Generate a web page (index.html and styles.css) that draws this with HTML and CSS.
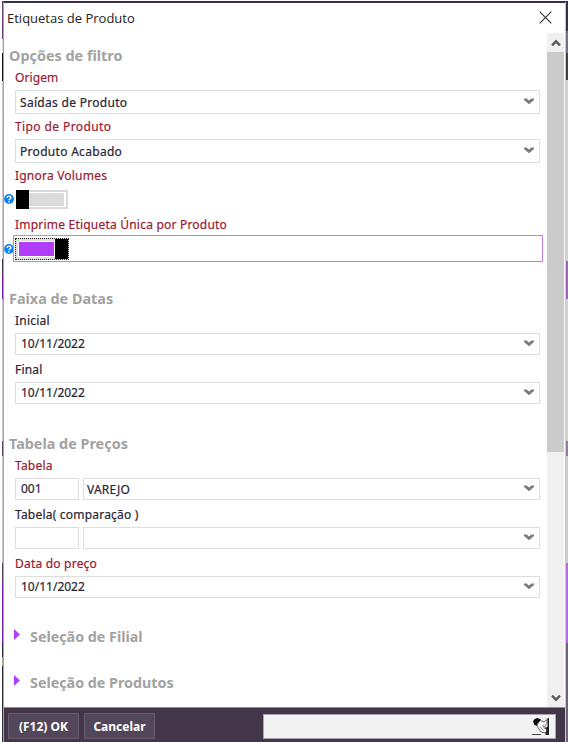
FILE: index.html
```
<!DOCTYPE html>
<html lang="pt-BR">
<head>
<meta charset="utf-8">
<title>Etiquetas de Produto</title>
<link rel="stylesheet" href="styles.css">
</head>
<body>
<svg class="defs" width="0" height="0"><defs>
<symbol id="chev" viewBox="0 0 10 7"><path d="M0 .5h2.6L5 2.6 7.4.5H10v1.6L5 6.2 0 2.1z" fill="#7b7b7b"/></symbol>
<symbol id="arrow" viewBox="0 0 10 8"><path d="M1 6.3l4-4 4 4" fill="none" stroke="#5a5a5a" stroke-width="2.4"/></symbol>
<symbol id="help" viewBox="0 0 10 10"><circle cx="5" cy="5" r="4.9" fill="#087ff5"/><path d="M3.2 4c0-2.6 3.7-2.3 3.7-.3C6.9 4.9 5 4.7 5 6.2" fill="none" stroke="#fff" stroke-width="1.4"/><path d="M4.3 7h1.4v1.4H4.3z" fill="#fff"/></symbol>
</defs></svg>
<div class="desktop">
<div class="backdrop left"></div>
<div class="window">
<header class="titlebar"><span class="title">Etiquetas de Produto</span>
<svg width="13" height="13" viewBox="0 0 13 13"><path d="M.7.7l11.6 11.6M12.3.7L.7 12.3" stroke="#333" stroke-width="1.1"/></svg></header>
<div class="content">
<main class="form">
<h2>Opções de filtro</h2>
<div class="item req"><label class="tight">Origem</label><div class="field tall"><span>Saídas de Produto</span><svg class="chev"><use href="#chev"/></svg></div></div>
<div class="item req"><label class="wide">Tipo de Produto</label><div class="field tall"><span>Produto Acabado</span><svg class="chev"><use href="#chev"/></svg></div></div>
<div class="item req"><label>Ignora Volumes</label><div class="toggle-row"><svg class="help"><use href="#help"/></svg><div class="switch off"><i class="knob"></i><i class="track"></i></div></div></div>
<div class="item req"><label>Imprime Etiqueta Única por Produto</label><div class="toggle-row selected"><svg class="help"><use href="#help"/></svg><div class="outline"><div class="switch on"><i class="track"></i><i class="knob"></i></div></div></div></div>
<h2>Faixa de Datas</h2>
<div class="item"><label>Inicial</label><div class="field date"><span>10/11/2022</span><svg class="chev"><use href="#chev"/></svg></div></div>
<div class="item"><label>Final</label><div class="field date"><span>10/11/2022</span><svg class="chev"><use href="#chev"/></svg></div></div>
<h2>Tabela de Preços</h2>
<div class="item req"><label>Tabela</label><div class="pair"><div class="field date"><span>001</span></div><div class="field name"><span>VAREJO</span><svg class="chev"><use href="#chev"/></svg></div></div></div>
<div class="item"><label>Tabela( comparação )</label><div class="pair"><div class="field date"></div><div class="field name"><span></span><svg class="chev"><use href="#chev"/></svg></div></div></div>
<div class="item req"><label>Data do preço</label><div class="field date"><span>10/11/2022</span><svg class="chev"><use href="#chev"/></svg></div></div>
<div class="group"><svg width="6" height="11"><path d="M0 0l6 5.5L0 11z" fill="#b13dff"/></svg><h2>Seleção de Filial</h2></div>
<div class="group"><svg width="6" height="11"><path d="M0 0l6 5.5L0 11z" fill="#b13dff"/></svg><h2>Seleção de Produtos</h2></div>
</main>
<aside class="scrollbar"><svg class="arrow"><use href="#arrow"/></svg><div class="thumb"></div><svg class="arrow down"><use href="#arrow"/></svg></aside>
</div>
<footer class="actions"><button>(F12) OK</button><button>Cancelar</button>
<div class="status"><svg width="18" height="19" viewBox="0 0 18 19"><path d="M1 4.5L2.5 2l3-1L9 2.5 7.5 5 6 6l-.5 3-3-1z" fill="#111"/><path d="M8.5 3.5L12 5l3-2.5v4L12.500 9l2.500 3-1 4-5-1-4-6L6 6z" fill="#fff" stroke="#555" stroke-width=".9"/><path d="M15.500 1H17v17h-3.500v-2.500l1.500-2-2-2 2.500-2z" fill="#222"/><path d="M8 9.500l3.500 4M10.500 8l2.500 4" stroke="#777" fill="none"/><path d="M0 17.500h9" stroke="#444"/></svg></div></footer>
</div>
<div class="backdrop right"></div>
</div>
</body>
</html>
```
FILE: styles.css
```
* { box-sizing: border-box; }
body { margin: 0; width: 568px; height: 742px; overflow: hidden; font-family: "Noto Sans", "Open Sans", sans-serif; font-size: 12px; color: #292532; background: #fff; }
.defs { position: absolute; }
svg { display: block; flex: none; }
.desktop { display: flex; height: 742px; padding: 1px 0 0 2px; }
.backdrop { width: 1px; border-top: 2px solid #48305a; }
.left { background: linear-gradient(#65427a 0 36px, #ddd 36px 50px, #111 50px 78px, #ccc 78px 256px, #45364f 256px 272px, #741aa8 272px 296px, #c9c9c9 296px 438px, #594064 438px 453px, #ccc 453px 560px, #50405b 560px 578px, #7922ad 578px 640px, #302939 640px 654px, #aaa58f 654px 663px, #302939 663px); }
.right { width: 2px; border-color: #30303b; background: linear-gradient(#363342 0 28px, #777283 28px 50px, #444 50px 77px, #d1d1d1 77px 258px, #a06abc 258px 296px, #d1d1d1 296px 438px, #91809d 438px 453px, #ccc 453px 560px, #b66fe0 560px 640px, #6d6575 640px); }
.window { width: 563px; border-top: 2px solid #3c2e49; border-left: 1px solid #a5a5a5; border-right: 1px solid #c8c8c8; background: #fff; display: flex; flex-direction: column; }
.titlebar { height: 30px; flex: none; display: flex; align-items: center; justify-content: space-between; padding: 0 13px 2px 3px; font-family: "Open Sans", sans-serif; font-size: 13px; color: #222; }
.title { padding-top: 2px; }
.content { height: 674px; flex: none; display: flex; }
.form { width: 543px; flex: none; padding: 13px 7px 0 11px; }
h2 { margin: 27px 0 0 -6px; height: 20px; line-height: 20px; font-size: 14.4px; font-weight: 700; color: #a2a2a2; white-space: nowrap; }
h2:first-child { margin-top: 0; }
.item { height: 49px; }
.item label { display: block; height: 24px; line-height: 24px; color: #292532; white-space: nowrap; letter-spacing: .21px; -webkit-text-stroke: .2px; }
.req label { color: #981b32; }
.item .tight { letter-spacing: .1px; line-height: 23px; }
.item .wide { letter-spacing: .4px; }
.field { width: 525px; border: 1px solid #dedede; background: #fff; padding: 0 5px 0 4px; display: flex; align-items: center; justify-content: space-between; white-space: nowrap; -webkit-text-stroke: .2px; }
.tall { height: 24px; letter-spacing: .3px; }
.tall .chev { margin-bottom: 1px; }
.date, .name { height: 22px; }
.date { padding-left: 5px; line-height: 20px; align-items: flex-start; }
.chev { width: 10px; height: 7px; }
.date .chev { margin-top: 6px; }
.pair { display: grid; grid-template-columns: 64px 1fr; gap: 4px; width: 525px; }
.pair .field { width: auto; }
.name { padding-left: 3px; letter-spacing: .2px; }
.name .chev { margin-bottom: 2px; }
.toggle-row { display: flex; align-items: center; height: 22px; margin-left: -11px; }
.help { width: 10px; height: 10px; }
.switch { display: flex; align-items: center; }
.off { width: 52px; height: 19px; margin-left: 2px; border: 2px solid #dadada; border-left: 0; }
.knob { width: 13px; height: 19px; background: #000; flex: none; }
.off .track { width: 35px; height: 13px; background: #dadada; }
.selected { height: 27px; margin-top: -2px; }
.outline { width: 530px; flex: none; height: 27px; margin-left: -1px; border: 1px solid #c77bf6; padding: 2px 0 0 1px; background: #fff; }
.on { width: 54px; height: 22px; border: 1px dotted #222; background: #dedede; }
.on .track { width: 37px; height: 16px; margin-left: 2px; border: 1px solid #fff; background: #b13dfa; }
.on .knob { height: 20px; }
.group { display: flex; height: 46px; }
.item + .group { margin-top: 26px; }
.group svg { margin: 2px 0 0 -1px; }
.group h2 { margin: 0 0 0 10px; font-size: 14.3px; }
.scrollbar { width: 17px; background: #f0f0f0; display: flex; flex-direction: column; align-items: center; }
.arrow { width: 10px; height: 8px; margin: 6px 0 5px; }
.thumb { width: 17px; height: 400px; background: #cbcbcb; }
.down { transform: rotate(180deg); margin-top: auto; }
.actions { height: 35px; flex: none; border-top: 1px solid #92899a; background: #433648; display: flex; align-items: flex-start; gap: 5px; padding: 5px 9px 0 4px; }
button { width: 71px; height: 26px; border: 1px solid #675b6d; background: #52465a; padding: 0; font: 700 12px "Noto Sans", sans-serif; color: #fff; white-space: nowrap; }
.status { width: 293px; height: 25px; margin: 1px 0 0 auto; border: 1px solid #aaa3ad; background: #f3f3f3; display: flex; align-items: center; justify-content: flex-end; padding-right: 5px; }
```
